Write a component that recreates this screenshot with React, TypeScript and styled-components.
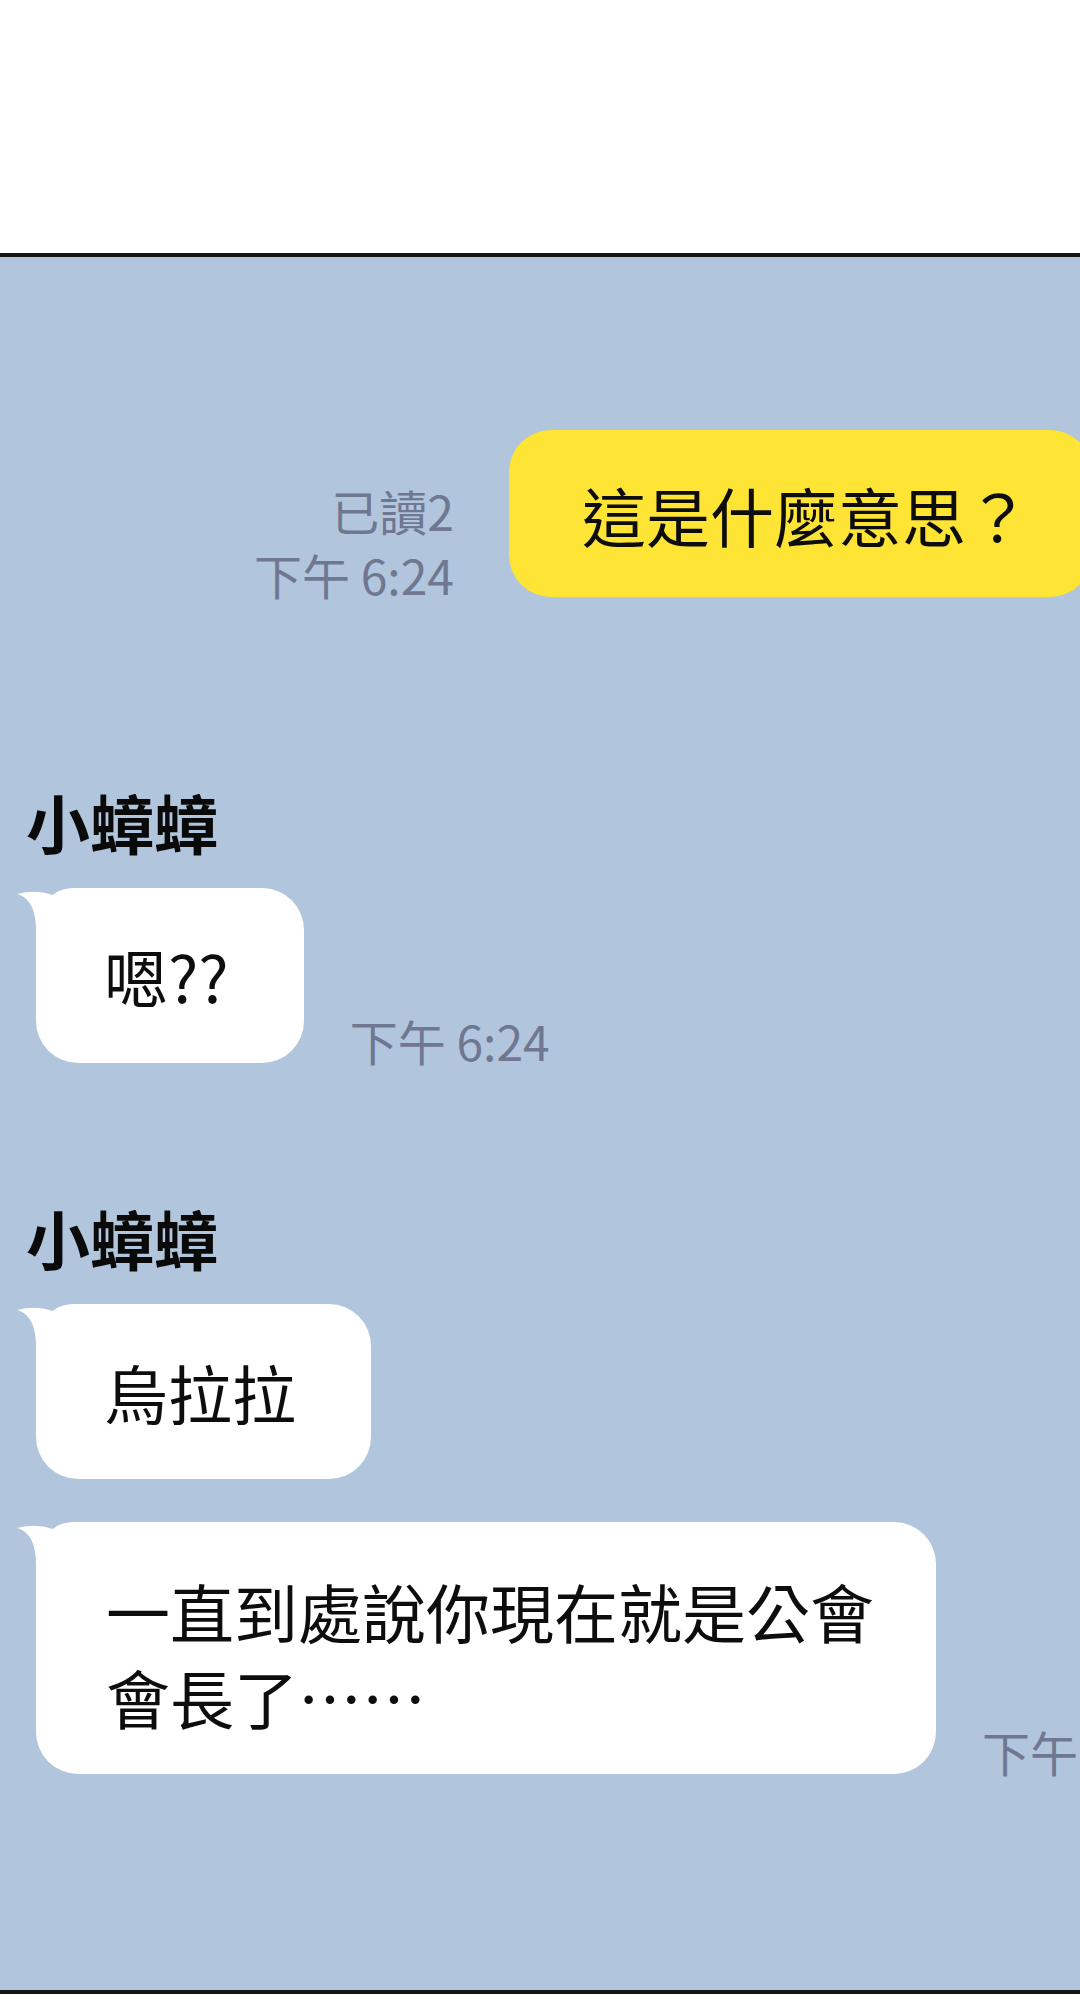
import React from "react";
import styled, { createGlobalStyle } from "styled-components";

const GlobalStyle = createGlobalStyle`
  html, body {
    margin: 0;
    padding: 0;
    background: #ffffff;
  }
  body {
    font-family: "Noto Sans CJK TC", "Noto Sans CJK SC", "Noto Sans", sans-serif;
    color: #111111;
  }
`;

const FONT = `"Noto Sans CJK TC", "Noto Sans CJK SC", "Noto Sans", sans-serif`;

const Page = styled.div`
  width: 1080px;
  height: 2000px;
  display: flex;
  flex-direction: column;
  background: #ffffff;
  overflow: hidden;
`;

const TopSpace = styled.div`
  height: 253px;
  flex-shrink: 0;
  background: #ffffff;
`;

const ChatArea = styled.main`
  box-sizing: border-box;
  height: 1741px;
  flex-shrink: 0;
  border-top: 4px solid #141414;
  border-bottom: 4px solid #141414;
  background: #b1c6dc;
  overflow: hidden;
  display: flex;
  flex-direction: column;
  padding: 173px 0 0 36px;
  font-family: ${FONT};
`;

const OutgoingRow = styled.div`
  display: flex;
  justify-content: flex-end;
  align-items: flex-end;
  gap: 55px;
  margin-right: -12px;
`;

const Meta = styled.div<{ $align?: "left" | "right" }>`
  display: flex;
  flex-direction: column;
  align-items: ${(p) => (p.$align === "right" ? "flex-end" : "flex-start")};
  flex-shrink: 0;
  font-size: 48px;
  line-height: 64px;
  color: #6f7791;
  white-space: nowrap;
  margin-bottom: -9px;
`;

const MyBubble = styled.div`
  background: #fee434;
  border-radius: 42px;
  padding: 41px 62px 40px 73px;
  font-size: 64px;
  line-height: 86px;
  color: #0d0d0d;
  white-space: nowrap;
  flex-shrink: 0;
`;

const Group = styled.section<{ $gap: number }>`
  display: flex;
  flex-direction: column;
  margin-top: ${(p) => p.$gap}px;
`;

const Name = styled.div`
  font-size: 64px;
  line-height: 64px;
  font-weight: 700;
  color: #0a0a0a;
  margin: 0 0 35px -10px;
`;

const IncomingRow = styled.div<{ $gap?: number }>`
  display: flex;
  align-items: flex-end;
  gap: 46px;
  margin-top: ${(p) => p.$gap ?? 0}px;
`;

const Bubble = styled.div<{ $wide?: boolean }>`
  position: relative;
  background: #ffffff;
  border-radius: 42px;
  padding: ${(p) => (p.$wide ? "45px 62px 35px 70px" : "44px 75px 45px 68px")};
  font-size: 64px;
  line-height: 86px;
  color: #0d0d0d;
  white-space: pre;
  flex-shrink: 0;
`;

const TailSvg = styled.svg`
  position: absolute;
  left: -20px;
  top: 0;
  width: 70px;
  height: 60px;
`;

const Tail = () => (
  <TailSvg viewBox="0 0 70 60" aria-hidden="true">
    <path
      d="M1,6 Q20,1 37,7 Q44,0 60,0 L70,0 L70,60 L20,60 L20,42 C20,24 15,10 1,6 Z"
      fill="#ffffff"
    />
  </TailSvg>
);

const TimeLine = styled.span``;

export default function App() {
  return (
    <>
      <GlobalStyle />
      <Page>
        <TopSpace />
        <ChatArea>
          <OutgoingRow>
            <Meta $align="right">
              <TimeLine>已讀2</TimeLine>
              <TimeLine>下午 6:24</TimeLine>
            </Meta>
            <MyBubble>這是什麼意思？</MyBubble>
          </OutgoingRow>

          <Group $gap={192}>
            <Name>小蟑蟑</Name>
            <IncomingRow>
              <Bubble>
                <Tail />
                嗯??
              </Bubble>
              <Meta>
                <TimeLine>下午 6:24</TimeLine>
              </Meta>
            </IncomingRow>
          </Group>

          <Group $gap={142}>
            <Name>小蟑蟑</Name>
            <IncomingRow>
              <Bubble>
                <Tail />
                烏拉拉
              </Bubble>
            </IncomingRow>
            <IncomingRow $gap={43}>
              <Bubble $wide>
                <Tail />
                {"一直到處說你現在就是公會\n會長了……"}
              </Bubble>
              <Meta>
                <TimeLine>下午 6:24</TimeLine>
              </Meta>
            </IncomingRow>
          </Group>
        </ChatArea>
      </Page>
    </>
  );
}
